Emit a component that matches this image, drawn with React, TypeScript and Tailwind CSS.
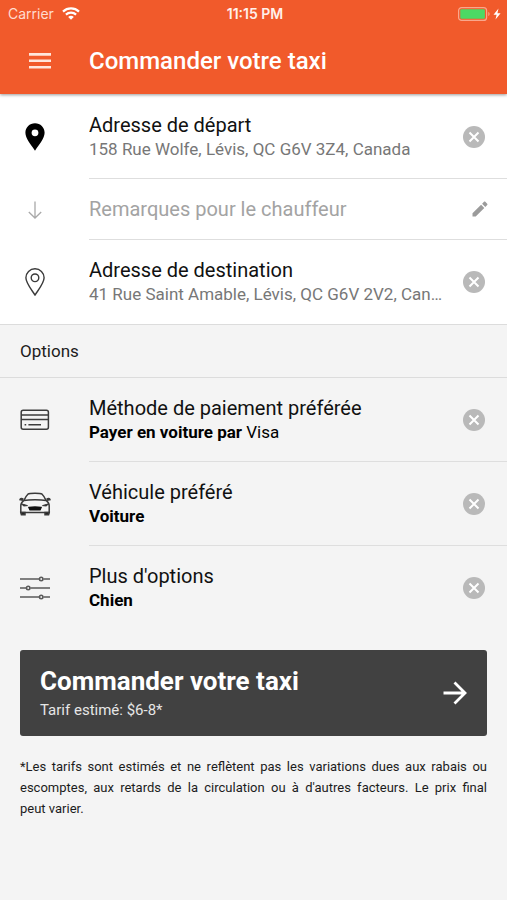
import { useState } from 'react'
import type { ReactNode } from 'react'

function PinSolid() {
  return (
    <svg viewBox="0 0 20 28" className="w-5 h-7">
      <path
        fillRule="evenodd"
        d="M10 0.3C4.6 0.3 0.4 4.5 0.4 9.8C0.4 15.2 5.8 21.5 10 27.7C14.2 21.5 19.6 15.2 19.6 9.8C19.6 4.5 15.4 0.3 10 0.3ZM10 6.4a3.4 3.4 0 1 1 0 6.8a3.4 3.4 0 1 1 0-6.8Z"
        fill="#000"
      />
    </svg>
  )
}

function PinOutline() {
  return (
    <svg viewBox="0 0 20 28" className="w-5 h-7" fill="none" stroke="#3a3a3a" strokeWidth="1.4">
      <path d="M10 0.8C4.9 0.8 0.9 4.8 0.9 9.8C0.9 15 5.9 20.8 10 27C14.1 20.8 19.1 15 19.1 9.8C19.1 4.8 15.1 0.8 10 0.8Z" />
      <circle cx="10" cy="9.8" r="3.8" />
    </svg>
  )
}

function ArrowDown() {
  return (
    <svg viewBox="0 0 14 18" className="w-[14px] h-[18px]" fill="none" stroke="#a9a9a9" strokeWidth="1.3">
      <path d="M7 0.5V17M0.8 11L7 17L13.2 11" />
    </svg>
  )
}

function CardIcon() {
  return (
    <svg viewBox="0 0 30 22" className="w-[30px] h-[22px]" fill="none" stroke="#3c3c3c" strokeWidth="1.5">
      <rect x="1.2" y="1.2" width="27.2" height="19" rx="2" />
      <path d="M1.2 6H28.4M1.2 10.6H28.4" />
      <path d="M4.6 15.8H6.2M8.4 15.8H21" />
    </svg>
  )
}

function CarIcon() {
  return (
    <svg viewBox="0 0 32 24" className="w-8 h-6 shrink-0" fill="none" stroke="#3a3a3a" strokeWidth="1.5">
      <path d="M5 8.4C6.2 5.6 7.4 3.5 8.9 2.2C10.7 1 21.3 1 23.1 2.2C24.6 3.5 25.8 5.600 27 8.4" />
      <path d="M5 8.4C10 7.6 22 7.6 27 8.4C29 9.8 30.2 11.4 30.2 13.8V20.5H1.8V13.8C1.8 11.4 3 9.8 5 8.4Z" />
      <path d="M4.5 7.3C2.8 6.200 1.3 6.3 1 7.6L4 8.2M27.5 7.3C29.2 6.2 30.7 6.3 31 7.6L28 8.2" />
      <path d="M3 12L8.5 13.6L4.5 14ZM29 12L23.5 13.6L27.5 14Z" fill="#111" strokeWidth="1" />
      <path d="M10 15.6C13 14.9 19 14.9 22 15.6L21 17.8H11Z" fill="#111" stroke="#111" />
      <path d="M1.8 20.5H6V22.8H2.4ZM30.2 20.5H26V22.8H29.6Z" fill="#222" />
    </svg>
  )
}

function SlidersIcon() {
  return (
    <svg viewBox="0 0 30 24" className="w-[30px] h-6" fill="none" stroke="#5a5a5a" strokeWidth="1.6">
      <path d="M0 3H19M23.4 3H30M0 12H6M10.4 12H30M0 21H19M23.4 21H30" />
      <circle cx="21.2" cy="3" r="1.7" />
      <circle cx="8.2" cy="12" r="1.7" />
      <circle cx="21.2" cy="21" r="1.7" />
    </svg>
  )
}

function ClearButton({ label, onClick }: { label: string; onClick: () => void }) {
  return (
    <button type="button" aria-label={label} onClick={onClick} className="shrink-0">
      <svg viewBox="0 0 22 22" className="w-[22px] h-[22px]">
        <circle cx="11" cy="11" r="11" fill="#b9b9b9" />
        <path d="M6.5 6.5L15.5 15.5M15.5 6.5L6.5 15.5" stroke="#fff" strokeWidth="2" />
      </svg>
    </button>
  )
}

type RowProps = {
  icon: ReactNode
  title: string
  children: ReactNode
  onClear: () => void
  muted?: boolean
  last?: boolean
}

function Row({ icon, title, children, onClear, muted, last }: RowProps) {
  return (
    <div className="flex">
      <div className="w-[89px] pl-5 shrink-0 flex items-center">
        <div className="w-[30px] flex justify-center">{icon}</div>
      </div>
      <div
        className={`flex-1 min-w-0 h-[84px] flex items-center gap-4 pr-[22px] border-b ${
          last ? 'border-transparent' : 'border-[#dedede]'
        }`}
      >
        <div className="flex-1 min-w-0">
          <h2 className="text-[20px] leading-6 text-[#111] truncate">{title}</h2>
          <p className={`text-[17px] leading-6 truncate ${muted ? 'text-[#777]' : 'text-black'}`}>{children}</p>
        </div>
        <ClearButton label={`Effacer ${title}`} onClick={onClear} />
      </div>
    </div>
  )
}

export default function App() {
  const [from, setFrom] = useState('158 Rue Wolfe, Lévis, QC G6V 3Z4, Canada')
  const [to, setTo] = useState('41 Rue Saint Amable, Lévis, QC G6V 2V2, Canada')
  const [notes, setNotes] = useState('')
  const [payment, setPayment] = useState('Visa')
  const [vehicle, setVehicle] = useState('Voiture')
  const [extras, setExtras] = useState('Chien')

  return (
    <div className="min-h-screen bg-[#f4f4f4] font-['Roboto',sans-serif] text-black">
      <header className="relative bg-[#f15a2b] text-white shadow-[0_1px_3px_rgba(0,0,0,0.4)]">
        <div className="h-[27px] pl-2 pr-[5px] grid grid-cols-3 items-center font-['Inter',sans-serif] text-[14px]">
          <div className="flex items-center gap-2 text-[#ffdccf]">
            <span>Carrier</span>
            <svg viewBox="0 0 18 13" className="w-[18px] h-[13px]" fill="none" stroke="#fff" strokeWidth="2.2">
              <path d="M1 4.6C5.5 0.4 12.5 0.4 17 4.6" />
              <path d="M3.9 7.6C6.8 5 11.2 5 14.1 7.6" />
              <path d="M6.2 9.9C7.8 8.5 10.2 8.5 11.8 9.9L9 12.7Z" fill="#fff" stroke="none" />
            </svg>
          </div>
          <span className="text-center font-semibold text-[#fff0ea]">11:15 PM</span>
          <div className="flex justify-end">
            <svg viewBox="0 0 44 14" className="w-11 h-[14px]">
              <rect x="0.6" y="0.6" width="28" height="12.8" rx="3" fill="none" stroke="#f9a78c" strokeWidth="1.2" />
              <rect x="2.3" y="2.3" width="24.6" height="9.4" rx="1.2" fill="#4cd964" />
              <path d="M30.3 5C32 5.5 32 8.5 30.3 9Z" fill="#f9a78c" />
              <path d="M40.5 1.5L35.5 7.8H38.6L37.5 12.5L42.6 6.2H39.4Z" fill="#fff" />
            </svg>
          </div>
        </div>
        <div className="h-[67px] flex items-center">
          <div className="w-[89px] pl-[29px] shrink-0 flex">
            <button type="button" aria-label="Menu">
              <svg viewBox="0 0 22 16" className="w-[22px] h-4" stroke="#ffe6dc" strokeWidth="2.6">
                <path d="M0 1.4H22M0 7.8H22M0 14.2H22" />
              </svg>
            </button>
          </div>
          <h1 className="text-[24px] leading-7 font-medium truncate">Commander votre taxi</h1>
        </div>
      </header>

      <main>
        <section className="bg-white pt-px border-b border-[#dcdcdc]">
          <Row icon={<PinSolid />} title="Adresse de départ" onClear={() => setFrom('')} muted>
            {from}
          </Row>
          <div className="flex">
            <div className="w-[89px] pl-5 shrink-0 flex items-center">
              <div className="w-[30px] flex justify-center">
                <ArrowDown />
              </div>
            </div>
            <div className="flex-1 min-w-0 h-[61px] flex items-center gap-4 pr-[19px] border-b border-[#dedede]">
              <input
                id="notes"
                type="text"
                aria-label="Remarques pour le chauffeur"
                placeholder="Remarques pour le chauffeur"
                value={notes}
                onChange={e => setNotes(e.target.value)}
                className="flex-1 min-w-0 text-[20px] leading-6 placeholder:text-[#a3a3a3] outline-none"
              />
              <label htmlFor="notes" className="shrink-0">
                <svg viewBox="0 0 16 16" className="w-4 h-4" fill="#9b9b9b">
                  <path d="M0.5 12.3V15.5H3.7L12.3 6.9L9.1 3.7ZM15.2 4C15.6 3.6 15.6 3.1 15.2 2.7L13.3 0.8C12.9 0.4 12.4 0.4 12 0.8L10.1 2.7L13.3 5.9Z" />
                </svg>
              </label>
            </div>
          </div>
          <Row icon={<PinOutline />} title="Adresse de destination" onClear={() => setTo('')} muted last>
            {to}
          </Row>
        </section>

        <h2 className="h-[53px] px-5 flex items-center text-[17px] leading-6 text-[#1c1c1c] border-b border-[#dcdcdc]">
          Options
        </h2>

        <section>
          <Row icon={<CardIcon />} title="Méthode de paiement préférée" onClear={() => setPayment('')}>
            <b>Payer en voiture par</b> {payment}
          </Row>
          <Row icon={<CarIcon />} title="Véhicule préféré" onClear={() => setVehicle('')}>
            <b>{vehicle}</b>
          </Row>
          <Row icon={<SlidersIcon />} title="Plus d'options" onClear={() => setExtras('')} last>
            <b>{extras}</b>
          </Row>
        </section>

        <div className="px-5 pt-5">
          <button
            type="button"
            className="w-full h-[86px] px-5 flex items-center justify-between rounded-[3px] bg-[#414141] text-left text-white"
          >
            <span>
              <span className="block text-[26px] leading-8 font-bold">Commander votre taxi</span>
              <span className="block mt-px text-[15px] leading-6 text-[#e6e6e6]">Tarif estimé: $6-8*</span>
            </span>
            <svg viewBox="0 0 24 24" className="w-6 h-6 shrink-0" fill="none" stroke="#fff" strokeWidth="2.8">
              <path d="M0.5 12H22M11.5 1.5L22 12L11.5 22.5" />
            </svg>
          </button>
          <p className="mt-5 text-[13px] leading-[21px] text-justify text-[#1c1c1c]">
            *Les tarifs sont estimés et ne reflètent pas les variations dues aux rabais ou escomptes, aux retards de la
            circulation ou à d'autres facteurs. Le prix final peut&nbsp;varier.
          </p>
        </div>
      </main>
    </div>
  )
}
